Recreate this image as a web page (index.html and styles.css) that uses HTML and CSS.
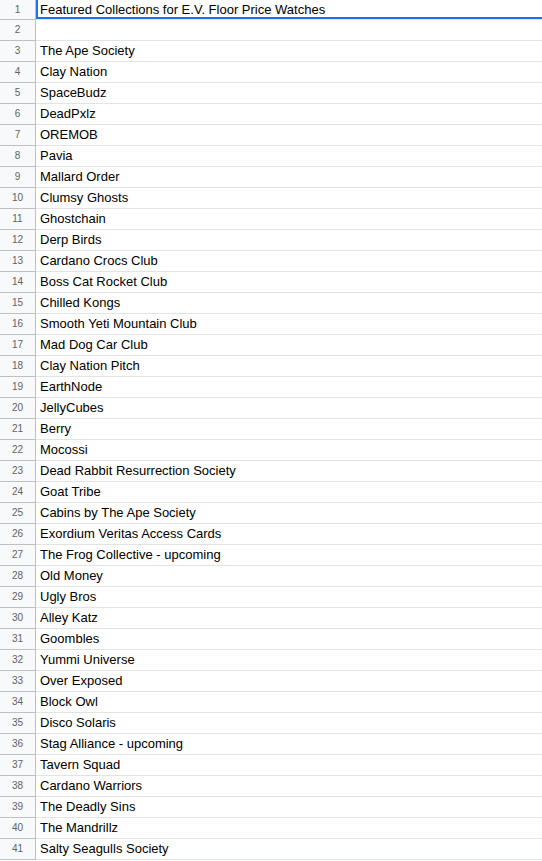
FILE: index.html
```html
<!DOCTYPE html>
<html lang="en">
<head>
    <meta charset="UTF-8">
    <meta name="viewport" content="width=device-width, initial-scale=1.0">
    <title>Featured Collections</title>
    <link rel="stylesheet" href="styles.css">
</head>
<body>
    <div class="sheet" id="sheet"></div>

    <script>
const names = [
    'Featured Collections for E.V. Floor Price Watches',
    '',
    'The Ape Society',
    'Clay Nation',
    'SpaceBudz',
    'DeadPxlz',
    'OREMOB',
    'Pavia',
    'Mallard Order',
    'Clumsy Ghosts',
    'Ghostchain',
    'Derp Birds',
    'Cardano Crocs Club',
    'Boss Cat Rocket Club',
    'Chilled Kongs',
    'Smooth Yeti Mountain Club',
    'Mad Dog Car Club',
    'Clay Nation Pitch',
    'EarthNode',
    'JellyCubes',
    'Berry',
    'Mocossi',
    'Dead Rabbit Resurrection Society',
    'Goat Tribe',
    'Cabins by The Ape Society',
    'Exordium Veritas Access Cards',
    'The Frog Collective - upcoming',
    'Old Money',
    'Ugly Bros',
    'Alley Katz',
    'Goombles',
    'Yummi Universe',
    'Over Exposed',
    'Block Owl',
    'Disco Solaris',
    'Stag Alliance - upcoming',
    'Tavern Squad',
    'Cardano Warriors',
    'The Deadly Sins',
    'The Mandrillz',
    'Salty Seagulls Society'
];

const sheet = document.getElementById('sheet');
names.forEach((name, i) => {
    const row = document.createElement('div');
    row.className = i === 0 ? 'row first' : 'row';
    const num = document.createElement('div');
    num.className = 'num';
    num.textContent = i + 1;
    const cell = document.createElement('div');
    cell.className = i === 0 ? 'cell selected' : 'cell';
    cell.textContent = name;
    row.append(num, cell);
    sheet.appendChild(row);
});
    </script>
</body>
</html>
```

FILE: styles.css
```css
body {
    margin: 0;
    background: #fff;
    font-family: "Liberation Sans", Arial, sans-serif;
    overflow: hidden;
}
.sheet {
    display: flex;
    flex-direction: column;
}
.row {
    display: flex;
    height: 21px;
    flex-shrink: 0;
}
.num {
    width: 35px;
    height: 20px;
    flex-shrink: 0;
    background: #f8f9fa;
    border-right: 1px solid #c0c0c0;
    border-bottom: 1px solid #c0c0c0;
    color: #5f6368;
    font-size: 10px;
    line-height: 20px;
    text-align: center;
}
.cell {
    flex: 1;
    height: 20px;
    border-bottom: 1px solid #e2e3e3;
    padding-left: 4px;
    font-size: 13px;
    line-height: 20px;
    color: #000;
    white-space: nowrap;
}
.first {
    height: 20px;
}
.first .num,
.first .cell {
    height: 19px;
    line-height: 19px;
}
.selected {
    box-shadow: inset 2px -2px 0 #1a73e8;
}
```
